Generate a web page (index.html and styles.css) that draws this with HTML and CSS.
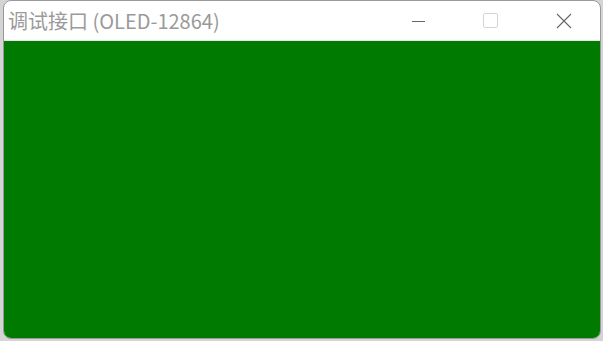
FILE: index.html
```html
<!DOCTYPE html>
<html lang="zh-CN">
<head>
  <meta charset="UTF-8">
  <title>调试接口 (OLED-12864)</title>
  <link rel="stylesheet" href="styles.css">
</head>
<body>

  <div class="desk">
    <!-- 窗口 -->
    <div class="win">
      <div class="titlebar">
        <span class="title">调试接口 (OLED-12864)</span>
        <div class="ctrls">
          <span class="btn">
            <svg width="14" height="14" viewBox="0 0 14 14"><path d="M1 7.5h14" stroke="#666" stroke-width="1"/></svg>
          </span>
          <span class="btn">
            <svg width="15" height="15" viewBox="0 0 15 15"><rect x="0.5" y="0.5" width="14" height="14" rx="1.5" fill="none" stroke="#d4d4d4" stroke-width="1"/></svg>
          </span>
          <span class="btn">
            <svg width="16" height="16" viewBox="0 0 16 16"><path d="M1 1L15 15M15 1L1 15" stroke="#666" stroke-width="1.1"/></svg>
          </span>
        </div>
      </div>
      <div class="screen"></div>
    </div>
  </div>

</body>
</html>
```

FILE: styles.css
```css
body {
  margin: 0;
  background: #d4d4d4;
  font-family: "Noto Sans CJK SC", "Noto Sans", sans-serif;
  overflow: hidden;
  height: 341px;
}

.desk {
  padding-left: 3px;
}

.win {
  width: 596px;
  height: 337px;
  border: 1px solid #9a9a9a;
  border-radius: 8px;
  overflow: hidden;
  background: #fff;
  display: flex;
  flex-direction: column;
}

.titlebar {
  height: 40px;
  display: flex;
  align-items: center;
  justify-content: space-between;
  border-bottom: 1px solid #e6e6e6;
  box-sizing: border-box;
}

.title {
  padding-left: 4px;
  padding-top: 1px;
  font-size: 20px;
  color: #9a9a9a;
  line-height: 1;
}

.ctrls {
  display: flex;
  height: 100%;
}

.btn {
  width: 73px;
  display: flex;
  align-items: center;
  justify-content: center;
}

.screen {
  flex: 1;
  background: #007a00;
}
```
